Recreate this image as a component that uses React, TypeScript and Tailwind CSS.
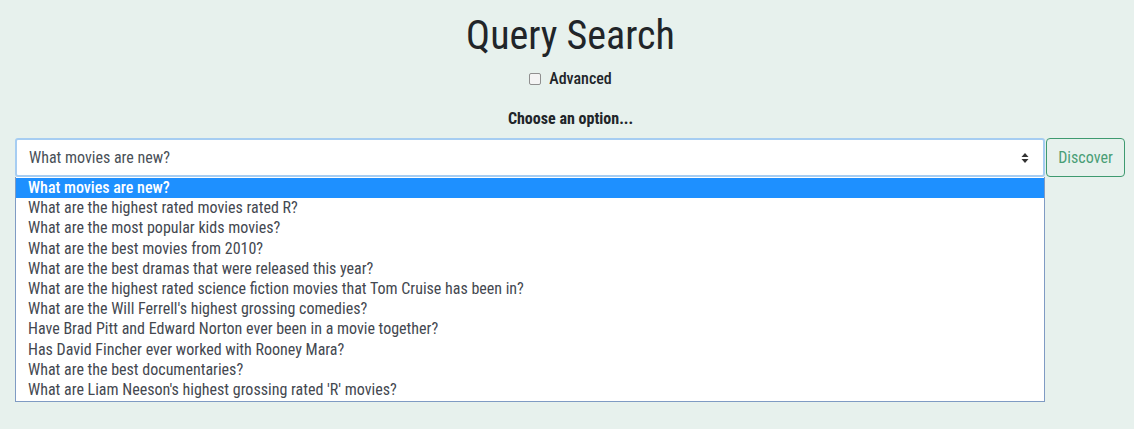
import React from "react";

const options = [
  "What movies are new?",
  "What are the highest rated movies rated R?",
  "What are the most popular kids movies?",
  "What are the best movies from 2010?",
  "What are the best dramas that were released this year?",
  "What are the highest rated science fiction movies that Tom Cruise has been in?",
  "What are the Will Ferrell's highest grossing comedies?",
  "Have Brad Pitt and Edward Norton ever been in a movie together?",
  "Has David Fincher ever worked with Rooney Mara?",
  "What are the best documentaries?",
  "What are Liam Neeson's highest grossing rated 'R' movies?",
];

const font = {
  fontFamily: '"Roboto Condensed", Roboto, "Liberation Sans", sans-serif',
  fontStretch: "75%",
} as React.CSSProperties;

export default function App() {
  return (
    <div className="w-[1134px] h-[429px] bg-[#e7f1ed] text-[#212529]" style={font}>
      <div className="flex flex-col items-center pt-[12px] pl-[7px]">
        <h1 className="text-[40px] leading-[48px] font-normal">Query Search</h1>
        <label className="flex items-center gap-[8px] mt-[7px] text-[16px] leading-[24px] font-medium">
          <span className="w-[12px] h-[12px] rounded-[2px] border border-[#8f8f8f] bg-[#f4f4f4]" />
          Advanced
        </label>
        <div className="mt-[16px] text-[16px] leading-[24px] font-bold">Choose an option...</div>
      </div>
      <div className="flex pl-[15px] pr-[9px] mt-[7px]">
        <div className="flex-1 flex flex-col">
          <div className="h-[39px] bg-white border-[2px] border-[#a6cdf2] rounded-[3px] flex items-center justify-between pl-[12px] pr-[14px] text-[16px] text-[#495057]">
            <span>What movies are new?</span>
            <svg width="8" height="12" viewBox="0 0 8 12">
              <path d="M4 1 L7.5 5 H0.5 Z" fill="#333" />
              <path d="M4 11 L7.5 7 H0.5 Z" fill="#333" />
            </svg>
          </div>
          <div className="bg-white border border-[#7f9bc3] border-t-0 pt-[1px] pb-[1px]">
            {options.map((o, i) => (
              <div
                key={i}
                className={
                  i === 0
                    ? "h-[20.2px] leading-[20px] pl-[12px] text-[16px] bg-[#1e90ff] text-white font-medium"
                    : "h-[20.2px] leading-[20px] pl-[12px] text-[16px] text-[#444850]"
                }
              >
                {o}
              </div>
            ))}
          </div>
        </div>
        <div className="self-start h-[39px] ml-[1px] w-[79px] flex items-center justify-center border border-[#3f9a70] rounded-[4px] text-[16px] text-[#4a9e76]">
          Discover
        </div>
      </div>
    </div>
  );
}
